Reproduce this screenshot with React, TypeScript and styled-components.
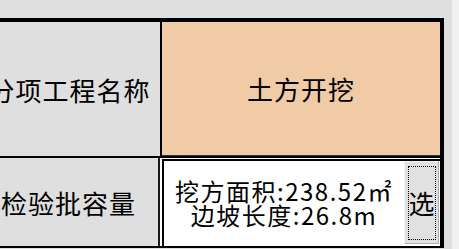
import React from "react";
import styled, { createGlobalStyle } from "styled-components";

const GlobalStyle = createGlobalStyle`
  html, body {
    margin: 0;
    padding: 0;
    background: #dfdfdf;
  }
  body {
    font-family: "Noto Sans CJK SC", "Noto Sans", sans-serif;
    color: #000;
  }
`;

// Styled components
const Page = styled.div`
  display: flex;
  width: 459px;
  height: 249px;
  overflow: hidden;
`;

const Sheet = styled.div`
  width: 452px;
  padding-top: 18px;
  background: #dfdfdf;
  overflow: hidden;
`;

const ScrollStrip = styled.div`
  flex: 1;
  background: #f0f0f0;
`;

const Table = styled.div`
  margin-left: -21px;
  width: 461px;
  border-top: 4px solid #000;
  border-right: 4px solid #000;
  display: flex;
  flex-direction: column;
`;

const Row = styled.div<{ $height: number; $closed?: boolean }>`
  display: flex;
  height: ${(p) => p.$height}px;
  border-bottom: ${(p) => (p.$closed ? "2px solid #000" : "none")};
`;

const LabelCell = styled.div<{ $width: number; $line: string }>`
  width: ${(p) => p.$width}px;
  flex-shrink: 0;
  display: flex;
  align-items: center;
  justify-content: center;
  background: #dfdfdf;
  border-right: 2px solid ${(p) => p.$line};
  font-size: 26px;
  letter-spacing: 1px;
`;

const ValueCell = styled.div`
  flex: 1;
  display: flex;
  align-items: center;
  justify-content: center;
  background: #f1caa6;
  border-bottom: 1px solid #1d3a5c;
  font-size: 26px;
  letter-spacing: 1px;
`;

const Divider = styled.div`
  height: 2px;
  background: #000;
`;

const EditorCell = styled.div`
  flex: 1;
  display: flex;
  background: #fff;
  padding: 1px 0 0 2px;
`;

const EditBox = styled.div`
  flex: 1;
  display: flex;
  border-left: 2px solid #000;
  border-top: 2px solid #000;
`;

const EditText = styled.div`
  flex: 1;
  display: flex;
  flex-direction: column;
  align-items: center;
  justify-content: center;
  font-size: 24px;
  line-height: 24px;
  letter-spacing: 1.5px;
  padding-bottom: 2px;
`;

const PickButton = styled.button`
  width: 35px;
  margin: 0 1px 2px 0;
  padding: 0;
  display: flex;
  align-items: center;
  justify-content: center;
  background: #e1e1e1;
  border: 1px solid #adadad;
  border-top-color: #f4f4f4;
  border-left-color: #f4f4f4;
  font-family: inherit;
  font-size: 26px;
  color: #000;
  position: relative;

  &::after {
    content: "";
    position: absolute;
    inset: 4px 2px 3px 3px;
    border: 1px dotted #000;
  }
`;

// Component
const App: React.FC = () => {
  return (
    <Page>
      <GlobalStyle />
      <Sheet>
        <Table>
          <Row $height={134}>
            <LabelCell $width={181} $line="#000">分项工程名称</LabelCell>
            <ValueCell>土方开挖</ValueCell>
          </Row>
          <Divider />
          <Row $height={88} $closed>
            <LabelCell $width={179} $line="#1a1a1a">检验批容量</LabelCell>
            <EditorCell>
              <EditBox>
                <EditText>
                  <span>挖方面积:238.52㎡</span>
                  <span>边坡长度:26.8m</span>
                </EditText>
                <PickButton>选</PickButton>
              </EditBox>
            </EditorCell>
          </Row>
        </Table>
      </Sheet>
      <ScrollStrip />
    </Page>
  );
};

export default App;
